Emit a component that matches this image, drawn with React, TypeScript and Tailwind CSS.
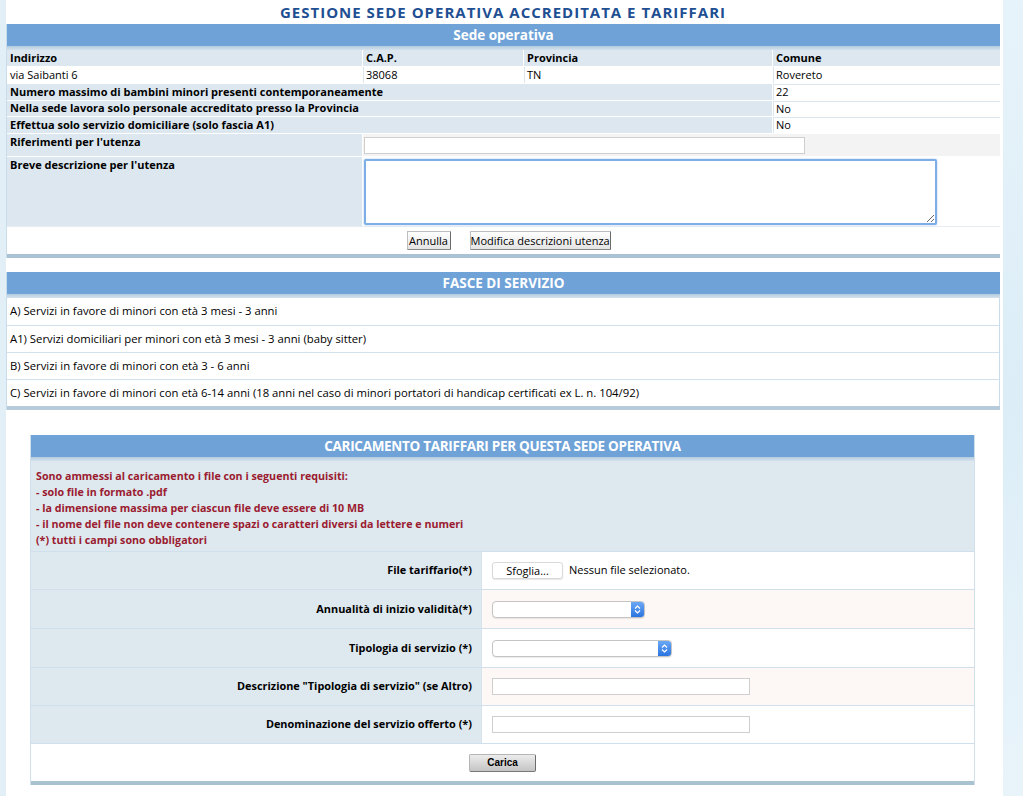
import React from 'react'

const font = { fontFamily: '"Open Sans", "DejaVu Sans", sans-serif' }

function HeaderBar({ title, tight = false }: { title: string; tight?: boolean }) {
  return (
    <div>
      <div
        className={`h-[22px] bg-[#6fa3d8] flex items-center justify-center text-white font-bold text-[13.5px] ${tight ? 'tracking-[-0.3px]' : ''}`}
      >
        {title}
      </div>
      <div className="h-[4px] bg-gradient-to-b from-[#b3cbdf] to-[#d4e2ec]" />
    </div>
  )
}

function MacButton({ label, w }: { label: string; w: string }) {
  return (
    <button
      className={`${w} h-[19px] text-[11px] whitespace-nowrap text-black bg-gradient-to-b from-white to-[#e4e4e4] border border-[#bdbdbd] border-r-[#6b6b6b] border-b-[#8a8a8a] rounded-[1px] leading-none`}
    >
      {label}
    </button>
  )
}

function SelectBox({ w }: { w: string }) {
  return (
    <div className={`${w} h-[17px] flex rounded-[4px] border border-[#c4c4c4] bg-white shadow-[0_1px_1px_rgba(0,0,0,0.08)] overflow-hidden`}>
      <div className="flex-1" />
      <div className="w-[13px] bg-gradient-to-b from-[#6aa8f5] to-[#2a74e0] flex flex-col items-center justify-center gap-[1px]">
        <svg width="7" height="4" viewBox="0 0 7 4"><path d="M1 3.5 L3.5 1 L6 3.5" stroke="white" strokeWidth="1.2" fill="none" /></svg>
        <svg width="7" height="4" viewBox="0 0 7 4"><path d="M1 0.5 L3.5 3 L6 0.5" stroke="white" strokeWidth="1.2" fill="none" /></svg>
      </div>
    </div>
  )
}

const labelCell = 'bg-[#dce7ef] font-bold text-[11px] text-black px-[3px] flex items-center'
const valueCell = 'bg-white text-[11px] text-black px-[2px] flex items-center'
const formLabel = 'bg-[#dde8ef] flex items-center justify-end pr-[9px] text-[10.9px] font-bold text-black'

const fasce = [
  'A) Servizi in favore di minori con età 3 mesi - 3 anni',
  'A1) Servizi domiciliari per minori con età 3 mesi - 3 anni (baby sitter)',
  'B) Servizi in favore di minori con età 3 - 6 anni',
  'C) Servizi in favore di minori con età 6-14 anni (18 anni nel caso di minori portatori di handicap certificati ex L. n. 104/92)',
]

const requisiti = [
  'Sono ammessi al caricamento i file con i seguenti requisiti:',
  '- solo file in formato .pdf',
  '- la dimensione massima per ciascun file deve essere di 10 MB',
  '- il nome del file non deve contenere spazi o caratteri diversi da lettere e numeri',
  '(*) tutti i campi sono obbligatori',
]

export default function App() {
  return (
    <div className="min-h-screen w-full flex bg-white" style={font}>
      {/* left strip */}
      <div className="w-[6px] shrink-0 bg-[#e2eff7]" />

      <div className="w-[997px] shrink-0 bg-white pb-[10px]">
        {/* Title */}
        <div className="h-[24px] flex items-center justify-center text-[15px] tracking-[1px] font-bold text-[#1f4f93] pr-[3px]">
          GESTIONE SEDE OPERATIVA ACCREDITATA E TARIFFARI
        </div>

        {/* Sede operativa */}
        <div className="w-[994px] border-l border-[#c9dceb]">
          <HeaderBar title="Sede operativa" />
          <div className="grid grid-cols-[355px_160px_248px_1fr] gap-px bg-white">
            <div className={`${labelCell} h-[16px]`}>Indirizzo</div>
            <div className={`${labelCell} h-[16px]`}>C.A.P.</div>
            <div className={`${labelCell} h-[16px]`}>Provincia</div>
            <div className={`${labelCell} h-[16px]`}>Comune</div>

            <div className={`${valueCell} h-[16px] px-[3px]`}>via Saibanti 6</div>
            <div className={`${valueCell} h-[16px] border-l border-[#dbe6ee]`}>38068</div>
            <div className={`${valueCell} h-[16px] border-l border-[#dbe6ee]`}>TN</div>
            <div className={`${valueCell} h-[16px] border-l border-[#dbe6ee]`}>Rovereto</div>

            <div className={`${labelCell} h-[16px] col-span-3`}>Numero massimo di bambini minori presenti contemporaneamente</div>
            <div className={`${valueCell} h-[16px] border-l border-[#dbe6ee] border-t border-t-[#dbe6ee]`}>22</div>

            <div className={`${labelCell} h-[15px] col-span-3`}>Nella sede lavora solo personale accreditato presso la Provincia</div>
            <div className={`${valueCell} h-[15px] border-l border-[#dbe6ee] border-t border-t-[#dbe6ee]`}>No</div>

            <div className={`${labelCell} h-[16px] col-span-3`}>Effettua solo servizio domiciliare (solo fascia A1)</div>
            <div className={`${valueCell} h-[16px] border-l border-[#dbe6ee] border-t border-t-[#dbe6ee]`}>No</div>

            <div className={`${labelCell} h-[22px] items-start`}>Riferimenti per l'utenza</div>
            <div className="col-span-3 bg-[#f3f3f3] flex items-center px-[1px]">
              <input className="w-[441px] h-[17px] bg-white border border-[#cfcfcf] outline-none" />
            </div>

            <div className={`${labelCell} h-[69px] items-start`}>Breve descrizione per l'utenza</div>
            <div className="col-span-3 bg-white flex items-center pl-[1px]">
              <textarea className="w-[573px] h-[66px] bg-white border-2 border-[#7eaee6] rounded-[2px] shadow-[0_0_2px_#9cc3ee] outline-none resize-y" />
            </div>
          </div>
          <div className="h-[28px] bg-white flex items-center justify-center gap-[19px] pl-[10px] border-t border-[#e6eef4]">
            <MacButton label="Annulla" w="w-[44px]" />
            <MacButton label="Modifica descrizioni utenza" w="w-[141px]" />
          </div>
          <div className="h-[4px] bg-[#a9c2d4]" />
        </div>

        {/* Fasce di servizio */}
        <div className="w-[994px] mt-[14px] border-l border-[#c9dceb]">
          <HeaderBar title="FASCE DI SERVIZIO" />
          <div className="flex flex-col border-r border-[#c9dceb]">
            {fasce.map((f, i) => (
              <div
                key={i}
                className={`h-[27px] flex items-center px-[3px] text-[11.3px] text-black bg-white ${i > 0 ? 'border-t border-[#d3e1ec]' : ''}`}
              >
                {f}
              </div>
            ))}
          </div>
          <div className="h-[4px] bg-[#b7cbdb]" />
        </div>

        {/* Caricamento tariffari */}
        <div className="ml-[24px] w-[945px] mt-[25px] border-l border-r border-[#cfe0ec]">
          <HeaderBar title="CARICAMENTO TARIFFARI PER QUESTA SEDE OPERATIVA" tight />
          <div className="bg-[#dde8ef] pt-[7px] pb-[3px] px-[5px] text-[10.7px] font-bold text-[#9b1b30] leading-[16px]">
            {requisiti.map((r, i) => (
              <div key={i}>{r}</div>
            ))}
          </div>

          <div className="flex flex-col">
            <div className="h-[38px] grid grid-cols-[450px_1fr] border-t border-[#cfdfec]">
              <div className={formLabel}>File tariffario(*)</div>
              <div className="bg-white flex items-center pl-[10px] gap-[6px] border-l border-[#d7e4ee]">
                <button className="w-[71px] h-[17px] text-[11px] text-black bg-white border border-[#d9d9d9] rounded-[3px] shadow-[0_1px_1px_rgba(0,0,0,0.1)]">Sfoglia...</button>
                <span className="text-[11px] text-black">Nessun file selezionato.</span>
              </div>
            </div>

            <div className="h-[39px] grid grid-cols-[450px_1fr] border-t border-[#cfdfec]">
              <div className={formLabel}>Annualità di inizio validità(*)</div>
              <div className="bg-[#fdf8f6] flex items-center pl-[10px] border-l border-[#d7e4ee]">
                <SelectBox w="w-[153px]" />
              </div>
            </div>

            <div className="h-[39px] grid grid-cols-[450px_1fr] border-t border-[#cfdfec]">
              <div className={formLabel}>Tipologia di servizio (*)</div>
              <div className="bg-white flex items-center pl-[10px] border-l border-[#d7e4ee]">
                <SelectBox w="w-[180px]" />
              </div>
            </div>

            <div className="h-[38px] grid grid-cols-[450px_1fr] border-t border-[#cfdfec]">
              <div className={formLabel}>Descrizione "Tipologia di servizio" (se Altro)</div>
              <div className="bg-[#fdf8f6] flex items-center pl-[10px] border-l border-[#d7e4ee]">
                <input className="w-[258px] h-[17px] bg-white border border-[#cfcfcf] outline-none" />
              </div>
            </div>

            <div className="h-[38px] grid grid-cols-[450px_1fr] border-t border-[#cfdfec]">
              <div className={formLabel}>Denominazione del servizio offerto (*)</div>
              <div className="bg-white flex items-center pl-[10px] border-l border-[#d7e4ee]">
                <input className="w-[258px] h-[17px] bg-white border border-[#cfcfcf] outline-none" />
              </div>
            </div>

            <div className="h-[38px] bg-white flex items-center justify-center border-t border-[#cfdfec]">
              <button
                className="w-[67px] h-[18px] text-[10px] font-bold text-black bg-gradient-to-b from-[#ececec] to-[#c4c4c4] border border-[#b5b5b5] border-r-[#6d6d6d] border-b-[#777] rounded-[2px]"
                style={{ fontFamily: '"Liberation Sans", Arial, sans-serif' }}
              >
                Carica
              </button>
            </div>
          </div>
          <div className="h-[4px] bg-[#a9c2d0]" />
        </div>
      </div>

      {/* right strip */}
      <div className="flex-1 bg-gradient-to-b from-[#e7f3fa] via-[#dcedf7] to-[#e9f4fa]" />
    </div>
  )
}
